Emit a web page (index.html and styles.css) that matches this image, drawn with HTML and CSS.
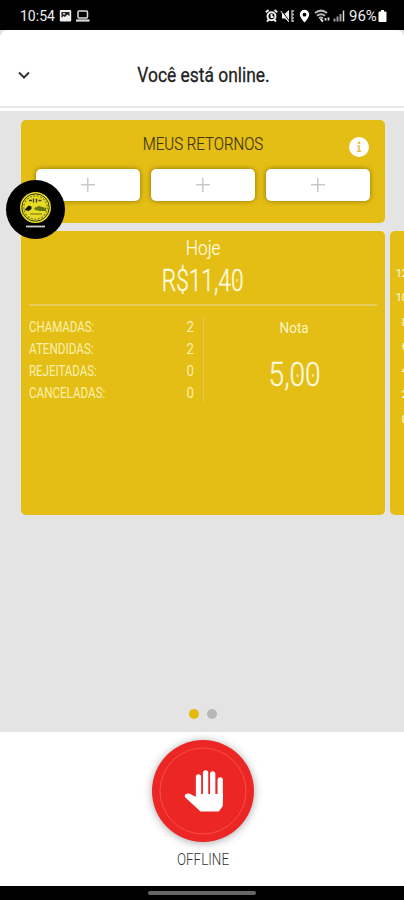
FILE: index.html
```html
<!DOCTYPE html>
<html lang="pt-BR">
<head>
<meta charset="utf-8">
<title>Status</title>
<link rel="stylesheet" href="styles.css">
</head>
<body>
<div class="status">
  <span class="clock">10:54</span>
  <svg class="left-icons" width="32" height="14" viewBox="0 0 32 14">
    <rect x="0.8" y="1" width="11.4" height="11.4" rx="1" fill="#eee"/>
    <path d="M2.5 3h8v4L8.2 5.5 6 8 4.5 7l-2 2z" fill="#222"/><circle cx="5" cy="4.7" r="1" fill="#eee"/>
    <rect x="19" y="2" width="9.500" height="7" rx="1" fill="none" stroke="#ddd" stroke-width="1.500"/>
    <path d="M17 11.500h13.500" stroke="#ddd" stroke-width="2.200"/>
  </svg>
  <svg class="right-icons" width="82" height="16" viewBox="0 0 82 16">
    <g fill="none" stroke="#eee" stroke-width="2">
      <circle cx="6.500" cy="8.300" r="4"/><path d="M.8 4.200 3.600 2M12.300 4.200 9.500 2M6.500 6v3h2M2 13.500l1.800-1.800M11 13.500l-1.800-1.800"/>
    </g>
    <path d="M17 5.500h3L24 2v12l-4-3.500h-3z" fill="#eee"/><path d="m16.500 2 8 11.500" stroke="#000" stroke-width="1"/><path d="m15.800 3 8 11" stroke="#eee" stroke-width="1"/>
    <path d="M27 2v12M26.500 3H29M26.500 6.500H29M26.500 10H29M26.500 13H29" stroke="#bbb" stroke-width="1.300"/>
    <path d="M39.500 1.800a4.700 4.700 0 0 0-4.700 4.800c0 3.200 4.700 8 4.700 8s4.700-4.800 4.700-8a4.700 4.700 0 0 0-4.700-4.800zm0 3a1.900 1.900 0 1 1 0 3.800 1.900 1.900 0 0 1 0-3.800z" fill="#fff"/>
    <g fill="none" stroke="#bbb" stroke-width="2"><path d="M50 5c3.800-3 8.200-3 12 0M52 7.800c2.500-2 5.500-2 8 0M54 10.300c1.300-1 2.700-1 4 0"/></g>
    <path d="m55.500 11 2.500 2.500M60.500 10v2.500M63.500 9.500v3" stroke="#ddd" stroke-width="1.800"/>
    <path d="M69.500 13.500v-3m3 3V8.500m3 5V6" stroke="#999" stroke-width="2"/><path d="M78.500 13.500V2.500" stroke="#ddd" stroke-width="1.500"/>
  </svg>
  <span class="battery-text"><span class="fit">96%</span></span>
  <svg class="battery" width="9" height="14" viewBox="0 0 9 14"><path d="M3 1h3v1.500h1.500q1 0 1 1V12q0 1-1 1h-6q-1 0-1-1V3.500q0-1 1-1H3z" fill="#fff"/></svg>
</div>

<div class="sheet">
<header class="header">
  <svg class="chevron" width="14" height="10" viewBox="0 0 14 10"><path d="m2 2.500 5 5 5-5" fill="none" stroke="#333" stroke-width="2"/></svg>
  <h1 class="fit title">Você está online.</h1>
</header>
</div>

<main class="main">
  <section class="card returns">
    <h2 class="fit returns-title">MEUS RETORNOS</h2>
    <svg class="info" width="20" height="20" viewBox="0 0 20 20"><circle cx="10" cy="10" r="10" fill="#fff"/><circle cx="10" cy="5.800" r="1.300" fill="#e5c03c"/><path d="M8.500 9H10v5M8 14.200h4" fill="none" stroke="#e5c03c" stroke-width="1.500"/></svg>
    <div class="slots">
      <button class="slot"><i class="plus"></i></button>
      <button class="slot"><i class="plus"></i></button>
      <button class="slot"><i class="plus"></i></button>
    </div>
    <div class="bubble">
      <svg width="59" height="59" viewBox="0 0 59 59">
        <circle cx="29.500" cy="27.500" r="15.500" fill="#e5dc26"/>
        <circle cx="29.500" cy="27.500" r="13.700" fill="none" stroke="#38360b" stroke-width="1"/>
        <circle cx="29.500" cy="27.500" r="11.700" fill="none" stroke="#8a841a" stroke-width="1.300" stroke-dasharray="2 1.500"/>
        <path d="M23 20.500h3m1.500-2v4m3-4v4m2-2h3" stroke="#424010" stroke-width="1.400"/>
        <path d="M18.500 30l4-4.500 3 1v2.500l-3 2z" fill="#16150a"/><path d="M28 28l5-2 7 2v3h-6l-5-1z" fill="#657511"/><path d="M24 34h12" stroke="#706c13" stroke-width="1"/>
        <path d="M20 46.500h19" stroke="#ccc" stroke-width="1.800"/>
      </svg>
    </div>
  </section>

  <div class="carousel">
    <section class="card today">
      <div class="day"><span class="fit">Hoje</span></div>
      <div class="amount"><span class="fit">R$11,4<span class="zero">0</span></span></div>
      <div class="details">
        <dl class="counts">
          <div class="row"><dt class="fit chamadas">CHAMADAS:</dt><dd class="fit">2</dd></div>
          <div class="row"><dt class="fit atendidas">ATENDIDAS:</dt><dd class="fit">2</dd></div>
          <div class="row"><dt class="fit rejeitadas">REJEITADAS:</dt><dd class="fit">0</dd></div>
          <div class="row"><dt class="fit canceladas">CANCELADAS:</dt><dd class="fit">0</dd></div>
        </dl>
        <div class="rating">
          <div class="rating-label"><span class="fit">Nota</span></div>
          <div class="rating-value"><span class="fit">5,<span class="zero">0</span><span class="zero">0</span></span></div>
        </div>
      </div>
    </section>
    <section class="card chart">
      <span>12</span><span>10</span><span>8</span><span>6</span><span>4</span><span>2</span><span>0</span>
    </section>
  </div>

  <div class="dots"><i class="dot active"></i><i class="dot"></i></div>
</main>

<footer class="footer">
  <button class="stop">
    <svg width="102" height="102" viewBox="0 0 102 102">
      <circle cx="51" cy="51" r="43" fill="none" stroke="#f45043" stroke-width="1"/>
      <g fill="none" stroke="#fff" stroke-width="5.300" stroke-linecap="round"><path d="M46.500 37v22M53.600 33v26M60.700 34v25M68.200 40v20"/></g>
      <path d="M44 54h26.800v12l-4 5.500H48.500L33.300 57.600q-1.500-2 .700-3.500 1.700-1.100 4-.3L44 57z" fill="#fff"/>
    </svg>
  </button>
  <div class="offline"><span class="fit">OFFLINE</span></div>
</footer>
<div class="nav"><i class="pill"></i></div>
</body>
</html>
```

FILE: styles.css
```css
* { box-sizing: border-box; }
body {
  margin: 0;
  width: 404px;
  height: 900px;
  overflow: hidden;
  display: flex;
  flex-direction: column;
  background: #fff;
  font-family: "Roboto", "Liberation Sans", sans-serif;
}
h1, h2, dl, dd, dt { margin: 0; font-weight: 400; }
button { border: 0; padding: 0; }
svg { display: block; }
.fit { display: inline-block; white-space: nowrap; }

.status {
  height: 30px;
  flex: none;
  background: #000;
  color: #eee;
  display: flex;
  align-items: center;
  padding: 1px 17px 0 20px;
}
.clock { font-size: 14px; width: 39px; }
.left-icons { flex: none; }
.right-icons { margin-left: auto; flex: none; }
.battery-text { font-size: 15px; width: 29px; margin-left: 2px; }
.battery-text .fit { transform: scaleX(1); transform-origin: left; }
.battery { flex: none; }

.sheet { flex: none; background: #dedede; }
.header {
  height: 78px;
  display: grid;
  grid-template-columns: 60px 1fr 60px;
  align-items: center;
  padding-top: 13px;
  background: #fff;
  border-bottom: 2px solid #e9e9e9;
  border-radius: 7px 7px 0 0;
}
.chevron { margin-left: 17px; }
.title {
  font-size: 20px;
  text-align: center;
  color: #222;
  -webkit-text-stroke: .3px #222;
  transform: translateX(1.500px) scaleX(.87);
}

.main {
  height: 621px;
  margin-top: 3px;
  flex: none;
  background: #e4e4e4;
  padding: 9px 0 0 21px;
  overflow: hidden;
}
.card { background: #e4be14; border-radius: 5px; }
.returns {
  position: relative;
  width: 364px;
  height: 103px;
  padding: 13px 15px 0;
  text-align: center;
}
.returns-title {
  display: block;
  font-size: 18px;
  line-height: 21px;
  color: #40350c;
  font-weight: 300;
  -webkit-text-stroke: .2px #40350c;
  transform: scaleX(.835);
}
.info { position: absolute; left: 328px; top: 17px; }
.slots { display: grid; grid-template-columns: repeat(3, 104px); gap: 11px; margin-top: 15px; }
.slot {
  height: 32px;
  border-radius: 5px;
  background: #fff;
  box-shadow: 0 0 5px rgba(80, 60, 0, .6);
  display: grid;
  place-items: center;
}
.plus {
  width: 14px;
  height: 14px;
  background: linear-gradient(#c9c9c9, #c9c9c9) center / 1.5px 14px no-repeat,
    linear-gradient(#c9c9c9, #c9c9c9) center / 14px 1.5px no-repeat;
}
.bubble {
  position: absolute;
  left: -15.5px;
  top: 60px;
  width: 59px;
  height: 59px;
  border-radius: 50%;
  background: #000;
}

.carousel { display: flex; gap: 5px; margin-top: 8px; }
.today { width: 364px; height: 284px; flex: none; color: #fffbe0; padding: 0 8px; }
.day { height: 34px; line-height: 34px; text-align: center; font-size: 20px; font-weight: 300; -webkit-text-stroke: .2px #fffbe0; }
.day .fit { transform: scaleX(.86); }
.amount {
  height: 41px;
  line-height: 31px;
  text-align: center;
  font-size: 32px;
  font-weight: 300;
  -webkit-text-stroke: .4px #fffbe0;
  border-bottom: 2px solid #e6cc58;
}
.amount .fit { transform: scaleX(.71); }
.zero { position: relative; }
.zero::after {
  content: "";
  position: absolute;
  left: calc(50% - 1px);
  top: calc(50% - 1px);
  width: 2px;
  height: 3px;
  background: #f6e9a4;
}
.details { display: flex; padding-top: 10px; }
.counts { width: 175px; height: 86px; border-right: 1px solid #e2c955; padding-right: 9px; color: #fbefae; }
.row { display: flex; justify-content: space-between; height: 22px; line-height: 22px; font-size: 14px; }
.row dt { transform-origin: left; transform: scaleX(.82); }
.row .atendidas { transform: scaleX(.835); }
.row .canceladas { transform: scaleX(.83); }
.row dd { transform-origin: right; transform: scaleX(.95); }
.rating { flex: 1; text-align: center; padding-left: 8px; }
.rating-label { font-size: 15px; line-height: 24px; color: #fdf5c8; }
.rating-label .fit { transform: scaleX(.9); }
.rating-value { font-size: 33px; line-height: 40px; font-weight: 300; margin-top: 15px; -webkit-text-stroke: .3px #fffbe0; }
.rating-value .fit { transform: scaleX(.85); }
.chart {
  width: 60px;
  height: 284px;
  flex: none;
  display: flex;
  flex-direction: column;
  padding-top: 31px;
  color: #fffbe0;
  font-size: 11px;
}
.chart span { width: 18px; height: 24.3px; line-height: 24px; text-align: right; }

.dots { display: flex; gap: 8px; justify-content: center; margin-top: 194px; padding-right: 19px; }
.dot { width: 10px; height: 10px; border-radius: 50%; background: #b7b7b7; }
.dot.active { background: #e4b90d; }

.footer { height: 154px; flex: none; display: flex; flex-direction: column; align-items: center; padding-top: 8px; padding-left: 2px; }
.stop {
  width: 102px;
  height: 102px;
  border-radius: 50%;
  background: #ec2624;
  box-shadow: 0 1px 8px rgba(0, 0, 0, .35);
}
.offline { font-size: 16px; line-height: 20px; margin-top: 8px; color: #333; font-weight: 300; }
.offline .fit { transform: scaleX(.84); }
.nav { height: 14px; flex: none; background: #000; display: flex; justify-content: center; padding-top: 5px; }
.pill { width: 108px; height: 4px; border-radius: 2px; background: #666; }
```
